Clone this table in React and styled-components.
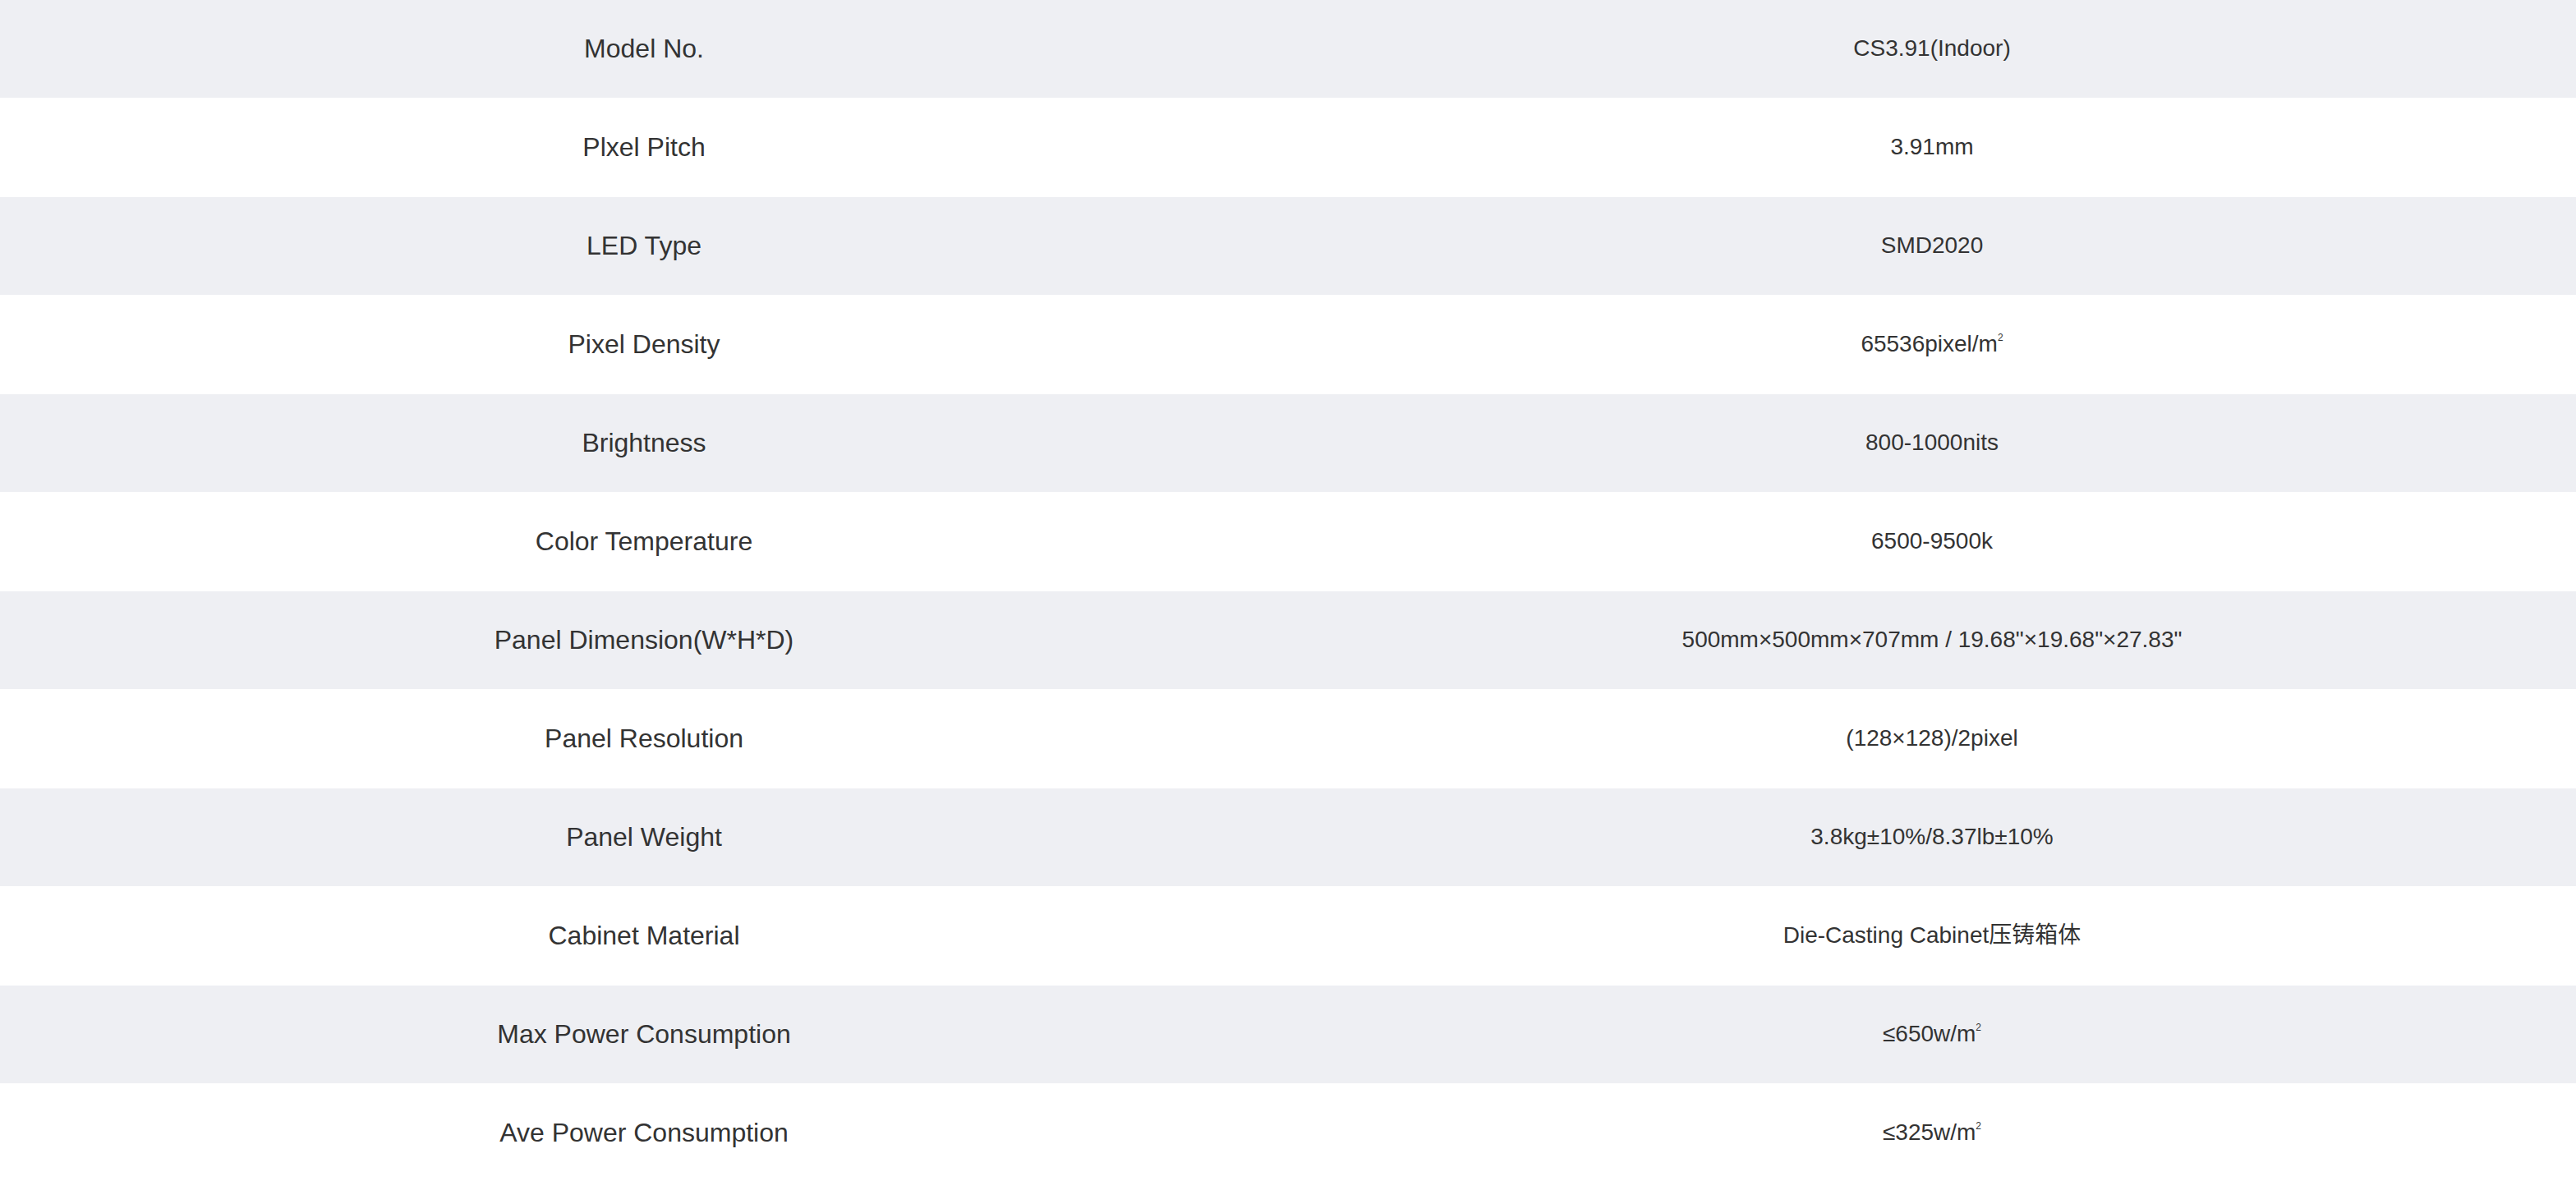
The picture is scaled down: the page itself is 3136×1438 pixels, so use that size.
import React from "react";
import styled, { createGlobalStyle } from "styled-components";

const Global = createGlobalStyle`
  html, body { margin: 0; padding: 0; background: #ffffff; }
  body { font-family: "Liberation Sans", Arial, "Noto Sans CJK SC", sans-serif; color: #333333; }
`;

const Table = styled.div`
  display: flex;
  flex-direction: column;
  width: 100%;
`;

const Row = styled.div`
  display: grid;
  grid-template-columns: 1fr 1fr;
  height: 119px;
  border-bottom: 1px solid #ffffff;
  background: ${(p) => (p.$shaded ? "#eeeff3" : "#ffffff")};
`;

const Cell = styled.div`
  display: flex;
  align-items: center;
  justify-content: center;
  padding-bottom: 2px;
  font-family: "Liberation Sans", Arial, "Noto Sans CJK SC", sans-serif;
  font-size: ${(p) => (p.$label ? "32px" : "28px")};
  line-height: 36px;
  color: #333333;
  white-space: nowrap;
`;

const Text = styled.span`
  display: block;
  line-height: 36px;
  height: 36px;
`;

const Sq = styled.span`
  font-size: 12px;
  line-height: 0;
  position: relative;
  top: -13px;
`;

const M2 = () => (
  <>
    m<Sq>2</Sq>
  </>
);

const rows = [
  ["Model No.", "CS3.91(Indoor)"],
  ["Plxel Pitch", "3.91mm"],
  ["LED Type", "SMD2020"],
  ["Pixel Density", <>65536pixel/<M2 /></>],
  ["Brightness", "800-1000nits"],
  ["Color Temperature", "6500-9500k"],
  ["Panel Dimension(W*H*D)", "500mm×500mm×707mm / 19.68\"×19.68\"×27.83\""],
  ["Panel Resolution", "(128×128)/2pixel"],
  ["Panel Weight", "3.8kg±10%/8.37lb±10%"],
  ["Cabinet Material", "Die-Casting Cabinet压铸箱体"],
  ["Max Power Consumption", <>≤650w/<M2 /></>],
  ["Ave Power Consumption", <>≤325w/<M2 /></>],
];

export default function App() {
  return (
    <>
      <Global />
      <Table>
        {rows.map(([label, value], i) => (
          <Row key={i} $shaded={i % 2 === 0}>
            <Cell $label><Text>{label}</Text></Cell>
            <Cell><Text>{value}</Text></Cell>
          </Row>
        ))}
      </Table>
    </>
  );
}
